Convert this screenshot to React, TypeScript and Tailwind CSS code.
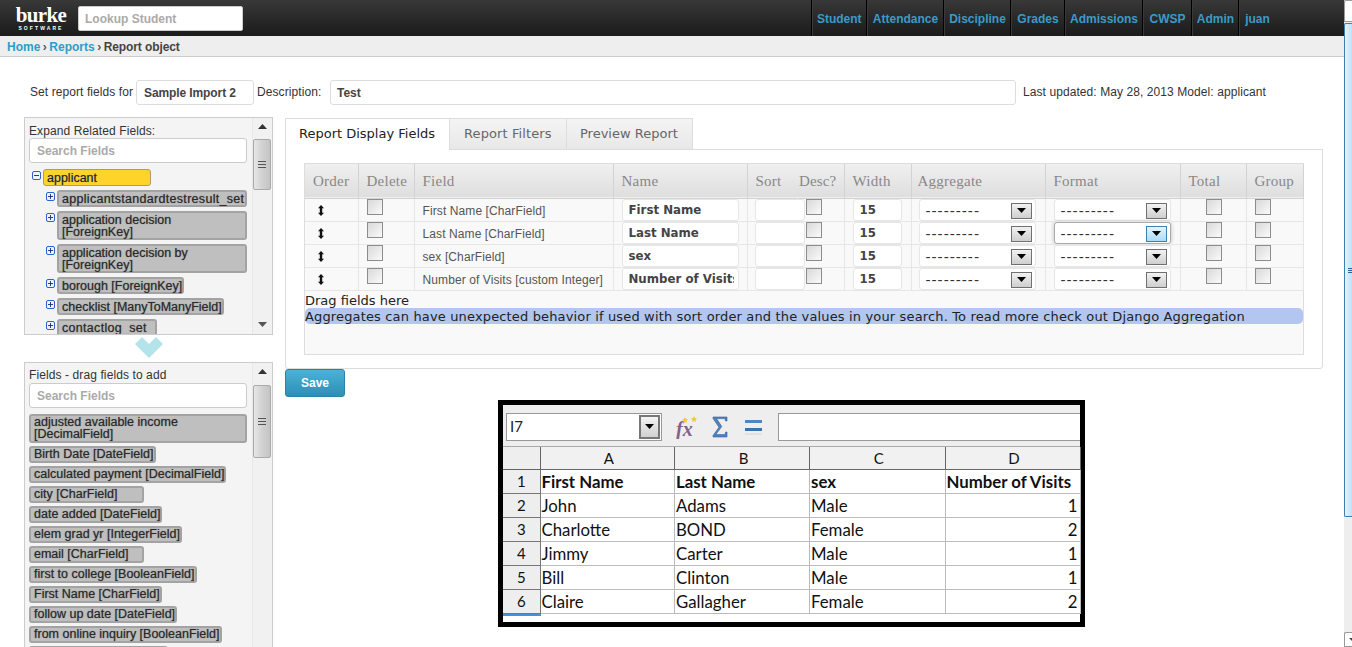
import React from 'react';

const navItems = [
  { label: 'Student', width: 'w-[55.5px]' },
  { label: 'Attendance', width: 'w-[77px]' },
  { label: 'Discipline', width: 'w-[67px]' },
  { label: 'Grades', width: 'w-[54px]' },
  { label: 'Admissions', width: 'w-[78px]' },
  { label: 'CWSP', width: 'w-[49px]' },
  { label: 'Admin', width: 'w-[47px]' },
  { label: 'juan', width: 'w-[37px]' },
];

const relatedFields = [
  { label: 'applicantstandardtestresult_set', width: 'w-full tracking-[0.3px]' },
  { label: 'application decision [ForeignKey]', width: 'w-full' },
  { label: 'application decision by [ForeignKey]', width: 'w-full' },
  { label: 'borough [ForeignKey]', width: 'w-fit' },
  { label: 'checklist [ManyToManyField]', width: 'w-fit' },
  { label: 'contactlog_set', width: 'w-[100px] tracking-[0.3px]' },
];

const addFields = [
  { label: 'adjusted available income [DecimalField]', width: 'w-full' },
  { label: 'Birth Date [DateField]', width: 'w-fit' },
  { label: 'calculated payment [DecimalField]', width: 'w-fit' },
  { label: 'city [CharField]', width: 'w-[115px]' },
  { label: 'date added [DateField]', width: 'w-fit' },
  { label: 'elem grad yr [IntegerField]', width: 'w-fit' },
  { label: 'email [CharField]', width: 'w-[115px]' },
  { label: 'first to college [BooleanField]', width: 'w-fit' },
  { label: 'First Name [CharField]', width: 'w-fit' },
  { label: 'follow up date [DateField]', width: 'w-fit' },
  { label: 'from online inquiry [BooleanField]', width: 'w-fit' },
  { label: 'gender [CharField]', width: 'w-[139px]' },
];

const reportRows = [
  { field: 'First Name [CharField]', name: 'First Name' },
  { field: 'Last Name [CharField]', name: 'Last Name' },
  { field: 'sex [CharField]', name: 'sex' },
  { field: 'Number of Visits [custom Integer]', name: 'Number of Visits' },
];

const sheetRows = [
  ['First Name', 'Last Name', 'sex', 'Number of Visits'],
  ['John', 'Adams', 'Male', '1'],
  ['Charlotte', 'BOND', 'Female', '2'],
  ['Jimmy', 'Carter', 'Male', '1'],
  ['Bill', 'Clinton', 'Male', '1'],
  ['Claire', 'Gallagher', 'Female', '2'],
];

const Tag = ({ label, className }: { label: string; className: string }) => (
  <div
    className={`${className} rounded-[3px] border-2 border-[#a3a3a3] bg-[#bfbfbf] pl-[3px] text-[12.5px] leading-[12px] text-[#2a2a2a] [text-shadow:0_0_1px_#666]`}
  >
    {label}
  </div>
);

const TreeIcon = ({ minus }: { minus?: boolean }) => (
  <div className="flex h-[9px] w-[9px] shrink-0 items-center justify-center rounded-[2px] border border-[#2f5fd0] bg-[#eef3ff]">
    <svg width="7" height="7" viewBox="0 0 7 7">
      <path d={minus ? 'M1 3.5H6' : 'M1 3.5H6M3.5 1V6'} stroke="#2a3f7a" strokeWidth="1" />
    </svg>
  </div>
);

const PanelScrollbar = ({ thumbTop, thumbHeight }: { thumbTop: number; thumbHeight: number }) => (
  <div className="flex w-[20px] shrink-0 flex-col items-center border-l border-[#e8e8e8] bg-[#f1f1f1]">
    <svg className="mt-[6px] shrink-0" width="9" height="5" viewBox="0 0 9 5">
      <path d="M0 5L4.5 0L9 5Z" fill="#333" />
    </svg>
    <div
      className="mr-[2px] flex w-[18px] shrink-0 flex-col items-center justify-center gap-[2px] rounded-[2px] border border-[#aaa] bg-gradient-to-r from-[#e6e6e6] via-[#d2d2d2] to-[#c4c4c4]"
      style={{ marginTop: thumbTop, height: thumbHeight }}
    >
      <div className="h-px w-[8px] bg-[#555]" />
      <div className="h-px w-[8px] bg-[#555]" />
      <div className="h-px w-[8px] bg-[#555]" />
    </div>
    <div className="flex-1" />
    <svg className="mb-[7px] shrink-0" width="9" height="5" viewBox="0 0 9 5">
      <path d="M0 0L4.5 5L9 0Z" fill="#555" />
    </svg>
  </div>
);

const SearchBox = () => (
  <div className="flex h-[25px] items-center rounded-[3px] border border-[#ccc] bg-white pl-[7px] text-[12px] font-bold text-[#aaa]">
    Search Fields
  </div>
);

const Checkbox = () => (
  <div className="h-[16px] w-[16px] border border-[#8c8c8c] bg-gradient-to-br from-[#d9d9d9] to-[#fafafa]" />
);

const SelectButton = ({ focus }: { focus?: boolean }) => (
  <div
    className={`flex h-[16px] w-[21px] items-start justify-center border pt-[4px] ${
      focus ? 'border-[#3c7fb1] bg-gradient-to-b from-[#e4f4fc] to-[#a9dbf6]' : 'border-[#707070] bg-gradient-to-b from-[#f2f2f2] to-[#cfcfcf]'
    }`}
  >
    <svg width="9" height="5" viewBox="0 0 9 5">
      <path d="M0 0H9L4.5 5Z" fill="#000" />
    </svg>
  </div>
);

const Select = ({ focus }: { focus?: boolean }) => (
  <div
    className={`flex h-[22px] w-[117.5px] items-start justify-between rounded-[3px] border bg-white pl-[6px] pr-[3px] pt-[3px] ${
      focus ? 'border-[#aaa] shadow-[0_0_4px_#bbb]' : 'border-[#e6e6e6]'
    }`}
  >
    <span className="font-['DejaVu_Sans',sans-serif] text-[14px] leading-[17px] tracking-[1px] text-[#333]">---------</span>
    <SelectButton focus={focus} />
  </div>
);

const ThCell = ({ children, className = 'pl-2' }: { children?: React.ReactNode; className?: string }) => (
  <th className={`border-r border-[#d2d2d2] text-left font-['Liberation_Serif',serif] text-[15px] font-normal tracking-[0.25px] text-[#888] ${className}`}>
    {children}
  </th>
);

const Td = ({ children, className = '' }: { children?: React.ReactNode; className?: string }) => (
  <td className={`overflow-visible border-b border-r border-[#e6e6e6] p-0 align-top ${className}`}>{children}</td>
);

const OrderIcon = () => (
  <svg width="6" height="11" viewBox="0 0 6 11" className="ml-[13px] mt-[6px] block">
    <path d="M3 0L6 3.2H4.2V7.8H6L3 11L0 7.8H1.8V3.2H0Z" fill="#111" />
  </svg>
);

const TextBox = ({ value, className = '' }: { value: string; className?: string }) => (
  <div
    className={`flex h-[22px] items-center rounded-[3px] border border-[#e6e6e6] bg-white pl-[6px] pr-[4px] pt-[2px] font-['DejaVu_Sans',sans-serif] text-[11.8px] font-bold text-[#444] ${className}`}
  >
    <span className="overflow-hidden whitespace-nowrap">{value}</span>
  </div>
);

const SheetToolbar = () => (
  <div className="flex h-[42px] items-center border-b border-[#aaa] bg-[#eeeeee] pl-[3px] pt-[2px]">
    <div className="flex h-[28px] w-[156px] items-center justify-between border border-[#999] bg-white pl-[3px] pr-[1px] font-['Lato',sans-serif] text-[15px] text-[#222]">
      I7
      <div className="flex h-[24px] w-[21px] items-center justify-center border-2 border-[#777] bg-gradient-to-b from-[#f4f4f4] to-[#d0d0d0]">
        <svg width="9" height="5" viewBox="0 0 9 5">
          <path d="M0 0H9L4.5 5Z" fill="#000" />
        </svg>
      </div>
    </div>
    {/* fx, sum and equals buttons */}
    <svg className="ml-[13px]" width="23" height="24" viewBox="0 0 23 24">
      <text x="1" y="21" fontFamily="Liberation Serif, serif" fontStyle="italic" fontWeight="700" fontSize="20" fill="#85608f">fx</text>
      <path d="M10 2L11 4L13 4.5L11.5 6L12 8L10 7L8 8L8.5 6L7 4.5L9 4ZM19 1L20 3L22 3.5L20.5 5L21 7L19 6L17 7L17.5 5L16 3.5L18 3Z" fill="#f2c935" />
    </svg>
    <svg className="ml-[14px]" width="16" height="22" viewBox="0 0 16 22">
      <path d="M1 1H15V5H13.6L12.8 2.6H4.5L9.8 10.5L3.8 18.6H12.8L13.8 16H15V21H1V19.6L7 11.2L1 2.4Z" fill="#4f86c0" stroke="#2c5d98" strokeWidth="0.6" />
    </svg>
    <svg className="ml-[17px]" width="17" height="18" viewBox="0 0 17 18">
      <rect x="0" y="2" width="17" height="3" fill="#4f86c0" />
      <rect x="0" y="10" width="17" height="3" fill="#3d73ad" />
      <rect x="0" y="15" width="17" height="2" fill="#e2e2e2" />
    </svg>
    <div className="ml-[16px] h-[28px] flex-1 border-y border-l border-[#999] bg-white" />
  </div>
);

const Spreadsheet = () => (
  <div className="ml-[213px] mt-[3px] w-[587px] border-[5px] border-black bg-white">
    <SheetToolbar />
    <div className="grid grid-cols-[37.5px_134.5px_135px_135.5px_135px] font-['Lato',sans-serif] text-[16.8px] leading-[23px] text-[#111]">
      <div className="h-[23px] border-b border-r border-[#666] bg-[#eeeeee]" />
      {['A', 'B', 'C', 'D'].map((c) => (
        <div key={c} className="h-[23px] border-b border-r border-[#666] bg-[#f1f1f1] pl-[3px] text-center text-[15px] last:border-r-0">
          {c}
        </div>
      ))}
      {sheetRows.map((row, i) => (
        <React.Fragment key={i}>
          <div className="h-[24px] border-b border-r border-[#777] bg-[#eeeeee] text-center text-[15px]">{i + 1}</div>
          {row.map((cell, j) => (
            <div
              key={j}
              className={`h-[24px] overflow-hidden whitespace-nowrap border-b border-r border-[#bbb] pl-[1px] ${i === 0 ? 'font-bold' : ''} ${
                j === 3 && i > 0 ? 'pr-[2px] text-right' : ''
              }`}
            >
              {cell}
            </div>
          ))}
        </React.Fragment>
      ))}
      <div className="h-[8px]">
        <div className="h-[2px] w-full bg-[#4a90d9]" />
      </div>
    </div>
  </div>
);

const App: React.FC = () => {
  return (
    <div className="flex h-[647px] w-[1352px] overflow-hidden bg-white font-['Liberation_Sans',sans-serif] text-[12px] text-[#333]">
      <div className="w-[1344px] shrink-0">
        {/* Top bar */}
        <header className="flex h-[36px] items-center justify-between bg-gradient-to-b from-[#383838] to-[#1b1b1b] pl-[16px] pr-[69px]">
          <div className="flex items-center gap-[12px]">
            <div className="flex w-[50px] flex-col items-center pt-px">
              <span className="font-['Liberation_Serif',serif] text-[21px] font-bold leading-[19px] tracking-[-0.6px] text-white">burke</span>
              <span className="text-[5px] font-bold leading-[6px] tracking-[2.1px] text-white">SOFTWARE</span>
            </div>
            <div className="flex h-[25px] w-[165px] items-center rounded-[2px] border border-[#ccc] bg-white pl-[6px] pt-px text-[12px] font-bold text-[#aaa]">
              Lookup Student
            </div>
          </div>
          <nav className="flex h-[36px] items-stretch">
            {navItems.map((item) => (
              <a
                key={item.label}
                className={`${item.width} flex items-center justify-center whitespace-nowrap border-l border-black pl-[1px] pt-[2px] text-[12px] font-bold text-[#3a9bc8] shadow-[inset_1px_0_0_#3a3a3a]`}
              >
                {item.label}
              </a>
            ))}
          </nav>
        </header>

        {/* Breadcrumb */}
        <div className="flex h-[21px] items-center border-b border-[#ccc] bg-[#eeeeee] pl-[7px] pt-[2px] text-[12px] font-bold">
          <span className="text-[#2e9cc9]">Home</span>
          <span className="mx-[2.5px] text-[#555]">›</span>
          <span className="text-[#2e9cc9]">Reports</span>
          <span className="mx-[2.5px] text-[#555]">›</span>
          <span className="tracking-[-0.1px] text-[#444]">Report object</span>
        </div>

        {/* Report meta row */}
        <div className="ml-[30px] mt-[23px] flex h-[25px] items-center">
          <span className="w-[106px] pb-[2px] tracking-[0.08px]">Set report fields for</span>
          <div className="flex h-[25px] w-[118px] items-center rounded-[3px] border border-[#ddd] pl-[7px] font-bold tracking-[-0.1px] text-[#444]">Sample Import 2</div>
          <span className="ml-[3px] w-[73px] pb-[2px] tracking-[0.08px]">Description:</span>
          <div className="flex h-[25px] w-[686px] items-center rounded-[3px] border border-[#ddd] pl-[6px] font-bold text-[#444]">Test</div>
          <span className="ml-[7px] pb-[2px] tracking-[0.08px]">Last updated: May 28, 2013 Model: applicant</span>
        </div>

        <div className="ml-[24px] mt-[12px] flex items-start">
          {/* Left column */}
          <div className="w-[249px] shrink-0">
            <div className="flex h-[218px] overflow-hidden border border-[#ccc] bg-[#f4f4f4]">
              <div className="min-w-0 flex-1 pl-[4px] pr-[5px] pt-[5px]">
                <div className="h-[15px] pt-px leading-[15px] tracking-[0.1px]">Expand Related Fields:</div>
                <SearchBox />
                <div className="ml-[3px] mt-[6px] flex items-start gap-[2px]">
                  <div className="mt-[2px]">
                    <TreeIcon minus />
                  </div>
                  <div className="h-[17px] w-[108px] rounded-[3px] border border-[#b09a68] bg-[#ffd42a] px-[3px] text-[12.5px] leading-[16px] text-[#222] [text-shadow:0_0_1px_#888]">
                    applicant
                  </div>
                </div>
                <div className="ml-[17px] mt-[4px] flex flex-col gap-[4px]">
                  {relatedFields.map((f) => (
                    <div key={f.label} className="flex items-start gap-[2px]">
                      <div className="mt-[2px]">
                        <TreeIcon />
                      </div>
                      <div className="min-w-0 flex-1">
                        <Tag label={f.label} className={`${f.width} pt-px`} />
                      </div>
                    </div>
                  ))}
                </div>
              </div>
              <PanelScrollbar thumbTop={10} thumbHeight={51} />
            </div>

            <div className="flex h-[27px] items-start justify-center pt-[2px]">
              <svg width="28" height="21" viewBox="0 0 28 21">
                <path d="M0 7L7 0L14 7L21 0L28 7L14 21Z" fill="#b5e3ea" />
              </svg>
            </div>

            <div className="flex h-[300px] overflow-hidden border border-[#ccc] bg-[#f4f4f4]">
              <div className="min-w-0 flex-1 pl-[4px] pr-[5px] pt-[5px]">
                <div className="h-[15px] leading-[15px] tracking-[0.1px]">Fields - drag fields to add</div>
                <SearchBox />
                <div className="mt-[6px] flex flex-col gap-[3px]">
                  {addFields.map((f) => (
                    <Tag key={f.label} label={f.label} className={`${f.width} pb-px`} />
                  ))}
                </div>
              </div>
              <PanelScrollbar thumbTop={11} thumbHeight={73} />
            </div>
          </div>

          {/* Right column */}
          <div className="ml-[12px] w-[1038px] shrink-0">
            <div className="mt-px flex h-[31px] font-['DejaVu_Sans',sans-serif] text-[13px] leading-[30px]">
              <div className="z-10 h-[32px] w-[165px] border-x border-t border-[#ddd] bg-white pl-[13px] text-[#222]">Report Display Fields</div>
              <div className="h-[31px] w-[117px] border-r border-t border-[#ddd] bg-gradient-to-b from-[#f4f4f4] to-[#e8e8e8] pl-[14px] tracking-[0.1px] text-[#666]">Report Filters</div>
              <div className="h-[31px] w-[126px] border-r border-t border-[#ddd] bg-gradient-to-b from-[#f4f4f4] to-[#e8e8e8] pl-[13px] text-[#666]">Preview Report</div>
            </div>

            <div className="h-[220px] rounded-b-[3px] border border-[#ddd] bg-white pl-[18px] pt-[13px]">
              <div className="h-[192px] w-[1000px] border border-[#ddd] bg-[#f9f9f9]">
                <table className="w-[998px] table-fixed border-collapse">
                  <colgroup>
                    <col className="w-[53px]" />
                    <col className="w-[56px]" />
                    <col className="w-[199px]" />
                    <col className="w-[134px]" />
                    <col className="w-[50px]" />
                    <col className="w-[47px]" />
                    <col className="w-[67px]" />
                    <col className="w-[134px]" />
                    <col className="w-[135px]" />
                    <col className="w-[66px]" />
                    <col className="w-[57px]" />
                  </colgroup>
                  <thead>
                    <tr className="h-[34px] border-b border-[#d2d2d2] bg-gradient-to-b from-[#f0f0f0] to-[#dedede]">
                      <ThCell className="pl-2 tracking-[0.5px]">Order</ThCell>
                      <ThCell>Delete</ThCell>
                      <ThCell>Field</ThCell>
                      <ThCell>Name</ThCell>
                      <th className="pl-2 text-left font-['Liberation_Serif',serif] text-[15px] font-normal tracking-[0.25px] text-[#888]">Sort</th>
                      <th className="overflow-visible whitespace-nowrap border-r border-[#d2d2d2] pl-[2px] text-left font-['Liberation_Serif',serif] text-[15px] font-normal tracking-[0.1px] text-[#888]">Desc?</th>
                      <ThCell>Width</ThCell>
                      <ThCell className="pl-[6px]">Aggregate</ThCell>
                      <ThCell>Format</ThCell>
                      <ThCell>Total</ThCell>
                      <ThCell>Group</ThCell>
                    </tr>
                  </thead>
                  <tbody>
                    {reportRows.map((row, i) => (
                      <tr key={row.field} className="h-[23px]">
                        <Td>
                          <OrderIcon />
                        </Td>
                        <Td className="pl-2">
                          <Checkbox />
                        </Td>
                        <Td className="whitespace-nowrap pl-2 pt-[2px] text-[12px] leading-[20px] tracking-[0.1px] text-[#555]">{row.field}</Td>
                        <Td className="pl-2">
                          <TextBox value={row.name} className="w-[117px]" />
                        </Td>
                        <Td className="relative">
                          <div className="absolute left-[7px] top-0 h-[22px] w-[50px] rounded-[3px] border border-[#e6e6e6] bg-white" />
                        </Td>
                        <Td className="relative pl-2">
                          <div className="relative">
                            <Checkbox />
                          </div>
                        </Td>
                        <Td className="pl-2">
                          <TextBox value="15" className="w-[49px]" />
                        </Td>
                        <Td className="pl-[7px]">
                          <Select />
                        </Td>
                        <Td className="pl-[8px]">
                          <Select focus={i === 1} />
                        </Td>
                        <Td className="pl-[25px]">
                          <Checkbox />
                        </Td>
                        <Td className="pl-2">
                          <Checkbox />
                        </Td>
                      </tr>
                    ))}
                  </tbody>
                </table>
                <div className="h-[17px] pt-px font-['DejaVu_Sans',sans-serif] text-[13px] leading-[17px] text-[#222]">Drag fields here</div>
                <div className="h-[16px] whitespace-nowrap rounded-[5px] bg-[#b2c6f0] pt-px font-['DejaVu_Sans',sans-serif] text-[13px] leading-[15px] tracking-[0.15px] text-[#222]">
                  Aggregates can have unexpected behavior if used with sort order and the values in your search. To read more check out Django Aggregation
                </div>
              </div>
            </div>

            <button className="block h-[28px] w-[60px] rounded-[3px] border border-[#2a82a6] bg-gradient-to-b from-[#4cb2d4] to-[#2b8fb7] text-[12px] font-bold text-white">
              Save
            </button>
            <Spreadsheet />
          </div>
        </div>
      </div>

      {/* Page scrollbar */}
      <div className="flex w-[8px] shrink-0 flex-col bg-[#eeeeee]">
        <div className="h-[22px] rounded-tl-[2px] border border-r-0 border-[#999] bg-white" />
        <div className="mt-px flex h-[494px] items-center rounded-l-[2px] border border-r-0 border-[#3c7fb1] bg-gradient-to-r from-[#e4f3fc] to-[#bfe2f7] pl-[3px]">
          <div className="flex flex-col gap-px">
            <div className="h-px w-[4px] bg-[#2a6496]" />
            <div className="h-px w-[4px] bg-[#2a6496]" />
            <div className="h-px w-[4px] bg-[#2a6496]" />
          </div>
        </div>
        <div className="flex-1" />
        <div className="h-[15px] rounded-tl-[2px] border border-r-0 border-[#999] bg-white pl-[4px] pt-[5px]">
          <svg width="4" height="4" viewBox="0 0 4 4">
            <path d="M0 0H4V4Z" fill="#444" />
          </svg>
        </div>
      </div>
    </div>
  );
};

export default App;
